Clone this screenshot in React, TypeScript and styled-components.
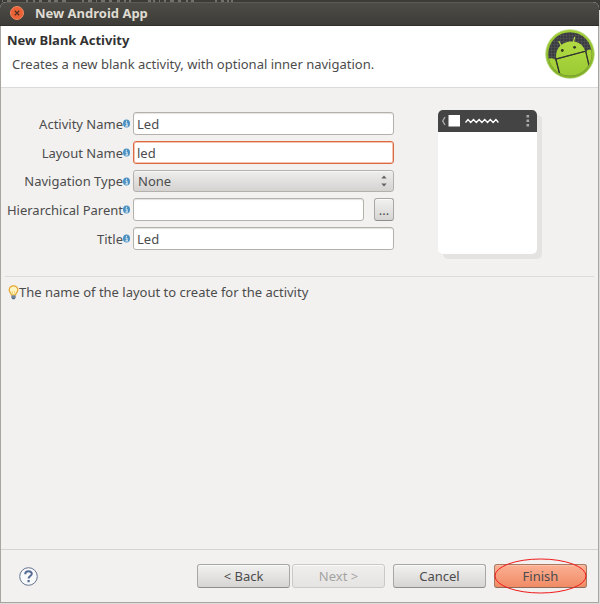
import React, { useState } from 'react';
import styled, { createGlobalStyle, css } from 'styled-components';

const GlobalStyle = createGlobalStyle`
  *, *::before, *::after { box-sizing: border-box; }
  body {
    margin: 0;
    background: #dddbd9;
    color: #4c4c4c;
    font-family: "Noto Sans", "Open Sans", sans-serif;
    font-size: 13px;
    line-height: 18px;
  }
  button, input, select { font: inherit; color: inherit; margin: 0; }
`;

const Desktop = styled.div`
  display: flex;
  flex-direction: column;
  min-height: 100vh;
`;

const MenuStrip = styled.div`
  flex: none;
  display: flex;
  height: 2px;
  overflow: hidden;
  background: #3c3b37;
`;

const DialogArea = styled.div`
  flex: 1;
  display: flex;
  padding: 0 1px 1px 0;
  background: linear-gradient(#3c3b37 8px, #dddbd9 8px);
`;

const Dialog = styled.main`
  flex: 1;
  display: flex;
  flex-direction: column;
  border-radius: 6px 6px 0 0;
  overflow: hidden;
  background: #f2f1f0;
`;

const TitleBar = styled.header`
  flex: none;
  display: flex;
  align-items: center;
  gap: 11px;
  height: 24px;
  padding: 0 10px 2px;
  border-top: 1px solid #5d5b53;
  border-bottom: 1px solid #302f2c;
  background: linear-gradient(#4d4c46, #3d3c38);
  color: #dfdbd2;
  font-weight: 700;
`;

const CloseButton = styled.button`
  display: flex;
  width: 14px;
  height: 14px;
  padding: 0;
  border: 0;
  border-radius: 50%;
  background: none;
`;

const Content = styled.div`
  flex: 1;
  display: flex;
  flex-direction: column;
  border: 1px solid #a9a6a2;
  border-top: 0;
`;

const Banner = styled.section`
  flex: none;
  display: flex;
  justify-content: space-between;
  height: 62px;
  padding: 3px 3px 0 6px;
  border-bottom: 1px solid #dcdbda;
  background: #fff;
`;

const Heading = styled.h1`
  margin: 2px 0 6px;
  color: #333;
  font-size: 13px;
  line-height: 18px;
`;

const Lead = styled.p`
  margin: 0 0 0 5px;
`;

const Body = styled.section`
  flex: 1;
  padding: 0 4px;
`;

const Setup = styled.div`
  display: flex;
  align-items: flex-start;
  padding: 22px 57px 22px 4px;
  border-bottom: 1px solid #dcdbda;
`;

const Form = styled.form`
  flex: 1;
  display: grid;
  grid-template-columns: 121px 1fr;
  column-gap: 3px;
  row-gap: 6px;
  padding-top: 2px;
`;

const Label = styled.label`
  display: flex;
  align-items: center;
  justify-content: flex-end;
  white-space: nowrap;
  > svg { flex: none; }
`;

const field = css`
  width: 100%;
  min-width: 0;
  border: 1px solid #b4b1ac;
  border-radius: 3px;
  outline: 0;
`;

const TextField = styled.input<{ $active?: boolean }>`
  ${field}
  height: 23px;
  padding: 0 3px;
  background: #fff;
  border-color: ${({ $active }) => ($active ? '#dc6a40' : '#b4b1ac')};
  box-shadow: ${({ $active }) => ($active ? 'inset 0 0 0 1px #f4c4b0' : 'inset 0 1px 1px #e4e3e1')};
`;

const SelectBox = styled.div`
  display: grid;
  align-items: center;
  > * { grid-area: 1 / 1; }
  > svg { justify-self: end; margin-right: 7px; pointer-events: none; }
`;

const Select = styled.select`
  ${field}
  appearance: none;
  height: 22px;
  padding: 0 4px;
  background: linear-gradient(#eeeeed, #d4d3d2);
  box-shadow: inset 0 1px 0 #f8f8f8;
`;

const BrowseRow = styled.div`
  display: flex;
  gap: 10px;
`;

const Button = styled.button<{ $tone?: 'accent' | 'small' }>`
  flex: none;
  width: ${({ $tone }) => ($tone === 'small' ? 20 : 93)}px;
  height: ${({ $tone }) => ($tone === 'small' ? 23 : 24)}px;
  padding: 0;
  border: 1px solid ${({ $tone }) => ($tone === 'accent' ? '#a87861' : '#aaa7a3')};
  border-bottom-color: ${({ $tone }) => ($tone === 'accent' ? '#8e6a5a' : '#908e8a')};
  border-radius: 3px;
  background: ${({ $tone }) =>
    $tone === 'accent' ? 'linear-gradient(#fbb093, #f08b66)' : 'linear-gradient(#f1f1f0, #d6d5d4)'};
  box-shadow: inset 0 1px 0 ${({ $tone }) => ($tone === 'accent' ? '#fdc1aa' : '#fafafa')};
  &:disabled {
    border-color: #cbc9c7;
    background: linear-gradient(#efeeed, #e5e4e3);
    color: #a5a3a1;
  }
`;

const Preview = styled.figure`
  flex: none;
  width: 99px;
  height: 144px;
  margin: 0 0 0 44px;
  border-radius: 5px;
  overflow: hidden;
  background: #fff;
`;

const PreviewShadow = styled.div`
  flex: none;
  filter: drop-shadow(5px 5px 0 #e4e3e2);
`;

const Hint = styled.p`
  display: flex;
  align-items: center;
  margin: 6px 0 0 3px;
`;

const Footer = styled.footer`
  flex: none;
  display: flex;
  align-items: center;
  height: 53px;
  padding: 0 11px 0 18px;
  border-top: 1px solid #d5d3d1;
`;

const HelpButton = styled.button`
  display: flex;
  margin-right: auto;
  padding: 0;
  border: 0;
  background: none;
`;

const Actions = styled.div`
  display: flex;
  gap: 8px;
`;

const ButtonPair = styled.div`
  display: flex;
  gap: 2px;
`;

const Circled = styled.div`
  position: relative;
  display: flex;
`;

const Ring = styled.svg`
  position: absolute;
  inset: -6px 0;
  width: 100%;
  height: 36px;
  pointer-events: none;
`;

const MenuTraces = () => (
  <svg width="300" height="2" viewBox="0 0 300 2" aria-hidden="true">
    <path
      d="M2 1h1M7 1h4M26 1h2M33 1h2M39 1h3M48 1h3M54 1h4M62 1h4M82 1h2M88 1h4M96 1h1M101 1h4M109 1h3M117 1h3M124 1h2M129 1h2M148 1h3M153 1h2M159 1h1M164 1h2M170 1h4M178 1h3M186 1h2M191 1h3M215 1h2M221 1h3M227 1h2M231 1h2"
      stroke="#aaa79f"
      strokeWidth="1"
      fill="none"
    />
  </svg>
);

const CloseIcon = () => (
  <svg width="14" height="14" viewBox="0 0 14 14" aria-hidden="true">
    <circle cx="7" cy="7" r="6.5" fill="#ec6237" stroke="#f08a62" />
    <path d="M4.8 4.8l4.4 4.4M9.2 4.8L4.8 9.2" stroke="#52301f" strokeWidth="1.3" />
  </svg>
);

const InfoIcon = () => (
  <svg width="7" height="9" viewBox="0 0 7 9" aria-hidden="true">
    <ellipse cx="3.5" cy="4.5" rx="3.5" ry="4" fill="#4a90c2" />
    <path d="M2.5 4h1.5v3M2.3 7h2.6M3 2.3h1.1" stroke="#fff" strokeWidth="0.9" fill="none" />
  </svg>
);

const Spinner = () => (
  <svg width="6" height="12" viewBox="0 0 6 12" aria-hidden="true">
    <path d="M0.3 3.6L3 0.5l2.7 3.1zM0.3 8.4L3 11.5l2.7-3.1z" fill="#656463" />
  </svg>
);

const AndroidLogo = () => (
  <svg width="50" height="50" viewBox="0 0 50 50" aria-hidden="true">
    <defs>
      <linearGradient id="ring" x1="0" y1="0" x2="0" y2="1">
        <stop offset="0" stopColor="#a3d039" />
        <stop offset="1" stopColor="#7fae26" />
      </linearGradient>
      <linearGradient id="robot" x1="0" y1="10" x2="0" y2="50" gradientUnits="userSpaceOnUse">
        <stop offset="0" stopColor="#b4dc44" />
        <stop offset="1" stopColor="#98c832" />
      </linearGradient>
      <pattern id="mesh" width="3" height="3" patternUnits="userSpaceOnUse">
        <rect width="3" height="3" fill="#3b3c3f" />
        <path d="M0 0h3M0 0v3" stroke="#5b5c60" strokeWidth="0.8" />
      </pattern>
      <clipPath id="disc"><circle cx="25" cy="25" r="21.8" /></clipPath>
    </defs>
    <circle cx="25" cy="25" r="24.3" fill="url(#ring)" stroke="#b8d878" strokeWidth="0.8" />
    <g clipPath="url(#disc)">
      <rect width="50" height="50" fill="url(#mesh)" />
      <path d="M11.2 29.3C10 20.5 15.5 14.6 22.5 13C30 11.3 37.8 14 40 21.8z" fill="url(#robot)" />
      <path d="M14 12.5l2.4 4.5M29.6 8.3l-1.2 5" stroke="#b4dc44" strokeWidth="1.3" strokeLinecap="round" />
      <path d="M11.4 30.5L40.3 22.8L46 50H16z" fill="url(#robot)" />
      <path d="M1 33c0-4 8-5.5 9.5-1.5L15 50H2zM41.5 23c1-4 6-3 7 1v22h-3z" fill="#a6d238" />
      <path d="M10.8 30.2l29.6-7.9M11 30.5L15.6 48M40.8 22.8l4.4 17" stroke="#30352a" strokeWidth="1.1" fill="none" />
      <circle cx="17.3" cy="21.5" r="1.4" fill="#343b22" />
      <circle cx="29.6" cy="18.3" r="1.4" fill="#343b22" />
    </g>
  </svg>
);

const PhoneBar = () => (
  <svg width="99" height="22" viewBox="0 0 99 22" aria-hidden="true">
    <rect width="99" height="22" fill="#444" />
    <path d="M7 7L4.7 11L7 15" stroke="#aaa" strokeWidth="1.4" fill="none" />
    <rect x="10.5" y="5" width="11.5" height="11.5" fill="#fff" />
    <path d="M27.5 12.5L30 9.5l2.7 3 2.8-3 2.8 3 2.8-3 2.8 3 2.8-3 2.8 3 2.8-3 2.8 3 2.8-3 2.5 3" stroke="#fff" strokeWidth="1.3" fill="none" />
    <path d="M88.5 5h2.6v2.6h-2.6zM88.5 9.5h2.6v2.6h-2.6zM88.5 14h2.6v2.6h-2.6z" fill="#aaa" />
  </svg>
);

const BulbIcon = () => (
  <svg width="11" height="15" viewBox="0 0 11 15" aria-hidden="true">
    <path d="M5.5 0.8A4.3 4.3 0 0 0 1.2 5c0 2.2 2 3 2.2 5h4.2c.2-2 2.2-2.8 2.2-5A4.3 4.3 0 0 0 5.5.8z" fill="#fff5c4" stroke="#e5a52a" strokeWidth="1.2" />
    <path d="M4.4 9.5V6M6.6 9.5V6" stroke="#f0cb68" strokeWidth="0.8" />
    <path d="M3.4 10.4h4.2v2.4l-1 1.4H4.4l-1-1.4z" fill="#4e6a86" />
    <path d="M3.4 12h4.2" stroke="#b5c3cf" strokeWidth="0.6" />
  </svg>
);

const HelpIcon = () => (
  <svg width="19" height="19" viewBox="0 0 19 19" aria-hidden="true">
    <circle cx="9.5" cy="9.5" r="8.8" fill="#f8f9fb" stroke="#65758f" />
    <path d="M6.2 7.2c0-4 6.6-3.8 6.6-.5 0 2.3-3.2 2.2-3.2 4.8" stroke="#556b94" strokeWidth="2" fill="none" />
    <rect x="8.5" y="13" width="2.2" height="2.2" fill="#556b94" />
  </svg>
);

type FieldName = 'activity' | 'layout' | 'parent' | 'title';

export default function App() {
  const [values, setValues] = useState<Record<FieldName, string>>({
    activity: 'Led',
    layout: 'led',
    parent: '',
    title: 'Led',
  });

  const bind = (name: FieldName) => ({
    id: name,
    value: values[name],
    onChange: (event: React.ChangeEvent<HTMLInputElement>) =>
      setValues({ ...values, [name]: event.target.value }),
  });

  return (
    <>
      <GlobalStyle />
      <Desktop>
        <MenuStrip><MenuTraces /></MenuStrip>
        <DialogArea>
          <Dialog>
            <TitleBar>
              <CloseButton aria-label="Close"><CloseIcon /></CloseButton>
              <span>New Android App</span>
            </TitleBar>
            <Content>
              <Banner>
                <div>
                  <Heading>New Blank Activity</Heading>
                  <Lead>Creates a new blank activity, with optional inner navigation.</Lead>
                </div>
                <AndroidLogo />
              </Banner>
              <Body>
                <Setup>
                  <Form>
                    <Label htmlFor="activity">Activity Name<InfoIcon /></Label>
                    <TextField {...bind('activity')} />
                    <Label htmlFor="layout">Layout Name<InfoIcon /></Label>
                    <TextField $active {...bind('layout')} />
                    <Label htmlFor="navigation">Navigation Type<InfoIcon /></Label>
                    <SelectBox>
                      <Select id="navigation"><option>None</option></Select>
                      <Spinner />
                    </SelectBox>
                    <Label htmlFor="parent">Hierarchical Parent<InfoIcon /></Label>
                    <BrowseRow>
                      <TextField {...bind('parent')} />
                      <Button type="button" $tone="small">...</Button>
                    </BrowseRow>
                    <Label htmlFor="title">Title<InfoIcon /></Label>
                    <TextField {...bind('title')} />
                  </Form>
                  <PreviewShadow>
                    <Preview aria-label="Activity preview"><PhoneBar /></Preview>
                  </PreviewShadow>
                </Setup>
                <Hint><BulbIcon />The name of the layout to create for the activity</Hint>
              </Body>
              <Footer>
                <HelpButton aria-label="Help"><HelpIcon /></HelpButton>
                <Actions>
                  <ButtonPair>
                    <Button>&lt; Back</Button>
                    <Button disabled>Next &gt;</Button>
                  </ButtonPair>
                  <Button>Cancel</Button>
                  <Circled>
                    <Button $tone="accent">Finish</Button>
                    <Ring viewBox="0 0 93 36" preserveAspectRatio="none" aria-hidden="true">
                      <ellipse cx="46.5" cy="18" rx="45.5" ry="17" fill="none" stroke="#f01818" />
                    </Ring>
                  </Circled>
                </Actions>
              </Footer>
            </Content>
          </Dialog>
        </DialogArea>
      </Desktop>
    </>
  );
}
